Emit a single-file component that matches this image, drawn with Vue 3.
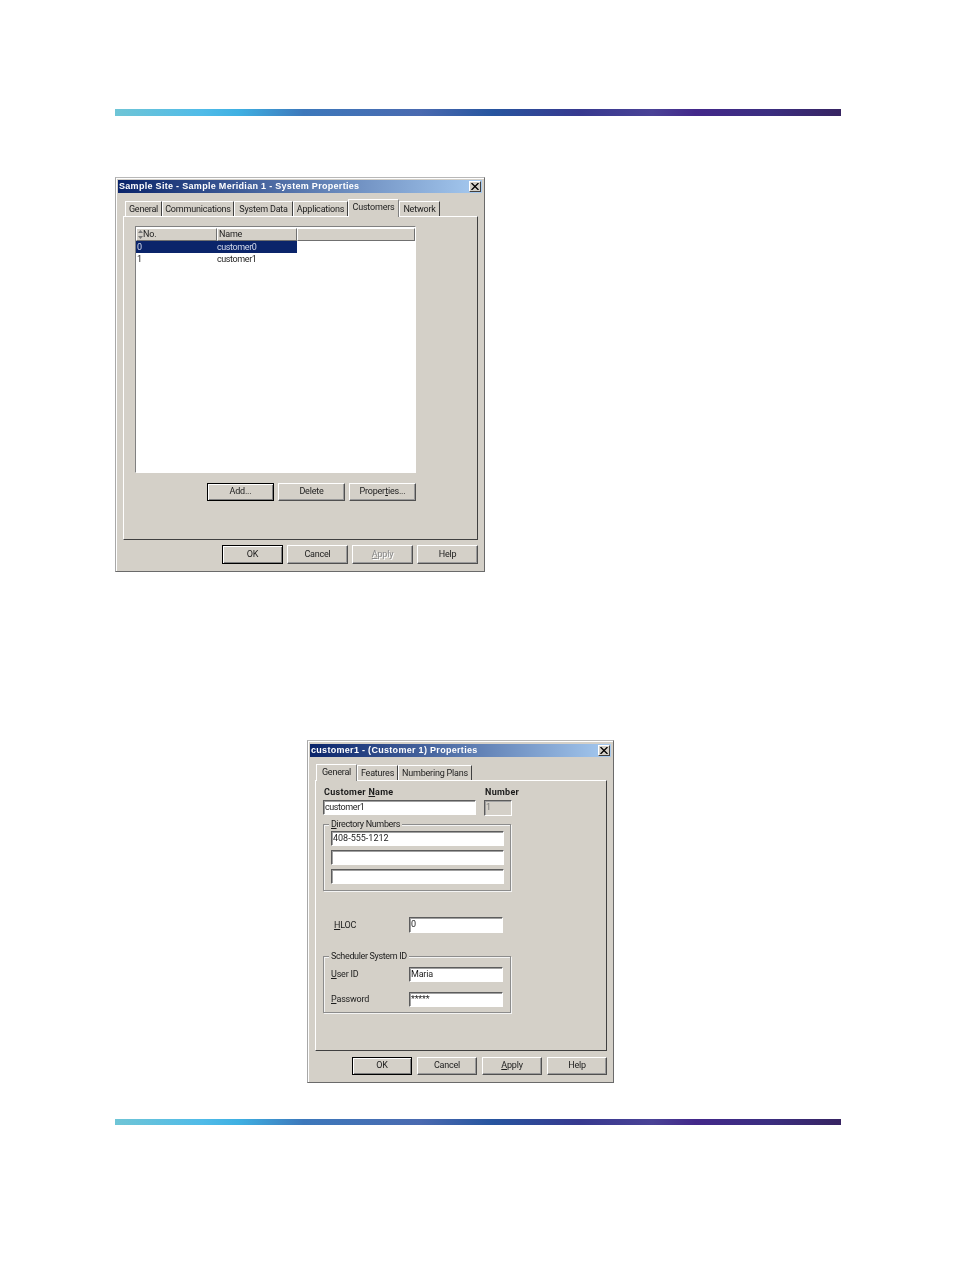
<script setup>
const tabs1 = [
  { label: 'General', w: 37 },
  { label: 'Communications', w: 72 },
  { label: 'System Data', w: 59 },
  { label: 'Applications', w: 55 },
  { label: 'Customers', w: 51, active: true },
  { label: 'Network', w: 41 },
]
const tabs2 = [
  { label: 'General', w: 41, active: true },
  { label: 'Features', w: 41 },
  { label: 'Numbering Plans', w: 74 },
]
const rows = [
  { no: '0', name: 'customer0', selected: true },
  { no: '1', name: 'customer1' },
]
</script>

<template>
  <div class="page">
    <div class="bar bar-top"></div>

    <section class="dialog dialog-one">
      <header class="title">
        <span class="title-text">Sample Site - Sample Meridian 1 - System Properties</span>
        <span class="close"><svg width="8" height="7" viewBox="0 0 8 7"><path d="M0.5 0 L7.5 7 M7.5 0 L0.5 7" stroke="#000" stroke-width="1.3" fill="none"/></svg></span>
      </header>
      <div class="tabs tabs-one">
        <div v-for="t in tabs1" :key="t.label" class="tab" :class="{ active: t.active }" :style="{ width: t.w + 'px' }">{{ t.label }}</div>
      </div>
      <div class="panel panel-one">
        <div class="list">
          <div class="list-head">
            <div class="col col-no">
              <svg class="sort" width="5" height="10" viewBox="0 0 5 10"><path d="M2.5 0 L5 3 H0 Z M0 6 H5 L2.5 9 Z" fill="#777"/></svg>
              No.
            </div>
            <div class="col col-name">Name</div>
            <div class="col col-rest"></div>
          </div>
          <div v-for="r in rows" :key="r.no" class="row" :class="{ selected: r.selected }">
            <span class="cell-no">{{ r.no }}</span>
            <span class="cell-name">{{ r.name }}</span>
          </div>
        </div>
        <div class="list-actions">
          <button class="btn btn-small default">Add...</button>
          <button class="btn btn-small">Delete</button>
          <button class="btn btn-small">Proper<u>t</u>ies...</button>
        </div>
      </div>
      <footer class="footer footer-one">
        <button class="btn btn-one default">OK</button>
        <button class="btn btn-one">Cancel</button>
        <button class="btn btn-one disabled"><u>A</u>pply</button>
        <button class="btn btn-one">Help</button>
      </footer>
    </section>

    <section class="dialog dialog-two">
      <header class="title">
        <span class="title-text">customer1 - (Customer 1) Properties</span>
        <span class="close"><svg width="8" height="7" viewBox="0 0 8 7"><path d="M0.5 0 L7.5 7 M7.5 0 L0.5 7" stroke="#000" stroke-width="1.3" fill="none"/></svg></span>
      </header>
      <div class="tabs tabs-two">
        <div v-for="t in tabs2" :key="t.label" class="tab" :class="{ active: t.active }" :style="{ width: t.w + 'px' }">{{ t.label }}</div>
      </div>
      <div class="panel panel-two">
        <div class="name-row">
          <div class="name-col">
            <div class="bold-label">Customer <u>N</u>ame</div>
            <div class="field field-name">customer1</div>
          </div>
          <div class="number-col">
            <div class="bold-label">Number</div>
            <div class="field field-number">1</div>
          </div>
        </div>

        <div class="group group-dn">
          <span class="legend"><u>D</u>irectory Numbers</span>
          <div class="field field-dn">408-555-1212</div>
          <div class="field field-dn"></div>
          <div class="field field-dn"></div>
        </div>

        <div class="form-row hloc-row">
          <label class="hloc-label"><u>H</u>LOC</label>
          <div class="field field-short">0</div>
        </div>

        <div class="group group-sched">
          <span class="legend">Scheduler System ID</span>
          <div class="form-row">
            <label class="sched-label"><u>U</u>ser ID</label>
            <div class="field field-user">Maria</div>
          </div>
          <div class="form-row pass-row">
            <label class="sched-label"><u>P</u>assword</label>
            <div class="field field-user">*****</div>
          </div>
        </div>
      </div>
      <footer class="footer footer-two">
        <button class="btn btn-two default">OK</button>
        <button class="btn btn-two">Cancel</button>
        <button class="btn btn-two"><u>A</u>pply</button>
        <button class="btn btn-two">Help</button>
      </footer>
    </section>

    <div class="bar bar-bottom"></div>
  </div>
</template>

<style scoped>
.page {
  width: 954px;
  height: 1272px;
  box-sizing: border-box;
  padding: 109px 0 0 115px;
  background: #fff;
  font-family: Roboto, "Liberation Sans", Arial, sans-serif;
  font-size: 9px;
  letter-spacing: -0.2px;
  color: #1c1c1c;
  overflow: hidden;
}
.bar {
  width: 726px;
  background: linear-gradient(90deg, #6fc5d6 0%, #50bbe8 12%, #3fb0e2 17%, #3d78bb 26%, #4a6ab0 42%, #27559f 52%, #37398f 64%, #4a4296 74%, #43288a 80%, #3b2e80 90%, #372462 100%);
}
.bar-top { height: 7px; }
.bar-bottom { height: 6px; margin-top: 36px; }

.dialog {
  box-sizing: border-box;
  background: #d4d0c8;
  border: 1px solid #6a6a6a;
  border-top-color: #b8b8b8;
  border-left-color: #a8a8a8;
  box-shadow: inset 1px 1px 0 #fff;
  padding: 2px;
  display: flex;
  flex-direction: column;
  filter: blur(0.25px);
}
.dialog-one { width: 370px; height: 395px; margin-top: 61px; }
.dialog-two { width: 307px; height: 343px; margin-top: 168px; margin-left: 192px; padding-top: 3px; }

.title {
  height: 13px;
  flex: none;
  display: flex;
  align-items: center;
  justify-content: space-between;
  padding-left: 1px;
  background: linear-gradient(90deg, #0a246a 0%, #a6caf0 100%);
  color: #fff;
  white-space: nowrap;
}
.title-text {
  font-family: "Liberation Sans", Arial, sans-serif;
  font-weight: bold;
  font-size: 9px;
  letter-spacing: 0.3px;
  line-height: 11px;
  margin-top: -1px;
}
.close {
  width: 12px;
  height: 11px;
  box-sizing: border-box;
  background: #d4d0c8;
  border: 1px solid;
  border-color: #fff #404040 #404040 #fff;
  display: flex;
  align-items: center;
  justify-content: center;
  margin-right: 1px;
}

.tabs {
  display: flex;
  align-items: flex-end;
  position: relative;
  z-index: 1;
  margin-left: 5px;
  flex: none;
}
.tabs-one { height: 18px; margin-top: 6px; padding-left: 2px; }
.tabs-two { height: 17px; margin-top: 7px; padding-left: 1px; }
.tab {
  box-sizing: border-box;
  height: 15px;
  border: 1px solid;
  border-color: #fff #404040 transparent #fff;
  border-bottom: 0;
  text-align: center;
  line-height: 15px;
  white-space: nowrap;
  background: #d4d0c8;
  margin-bottom: 1px;
}
.tab.active {
  height: 100%;
  margin-bottom: 0;
  line-height: 14px;
  border-right-color: #808080;
}

.panel {
  box-sizing: border-box;
  flex: none;
  margin-top: -1px;
  margin-left: 5px;
  border: 1px solid;
  border-color: #fff #404040 #404040 #fff;
}
.panel-one { width: 355px; height: 324px; padding: 9px 0 0 11px; }
.panel-two { width: 292px; height: 271px; padding: 6px 0 0 7px; }

.list {
  box-sizing: border-box;
  width: 281px;
  height: 247px;
  background: #fff;
  border: 1px solid;
  border-color: #808080 #fff #fff #808080;
}
.list-head {
  display: flex;
  height: 13px;
  margin-top: 1px;
  background: #d4d0c8;
}
.col {
  box-sizing: border-box;
  height: 13px;
  line-height: 11px;
  border: 1px solid;
  border-color: #fff #707070 #707070 #fff;
  padding-left: 1px;
  white-space: nowrap;
  display: flex;
  align-items: center;
}
.col-no { width: 81px; }
.col-name { width: 80px; }
.col-rest { flex: 1; }
.sort { flex: none; }
.row {
  display: flex;
  width: 161px;
  height: 12px;
  line-height: 12px;
  white-space: nowrap;
}
.row.selected { background: #0a246a; color: #d6dcec; }
.cell-no { width: 81px; padding-left: 1px; box-sizing: border-box; }
.cell-name { flex: 1; letter-spacing: -0.4px; }

.list-actions {
  display: flex;
  justify-content: flex-end;
  gap: 4px;
  width: 281px;
  margin-top: 10px;
}

.btn {
  box-sizing: border-box;
  flex: none;
  margin: 0;
  padding: 0 0 2px;
  background: #d4d0c8;
  border: 1px solid;
  border-color: #fff #505050 #505050 #fff;
  font: inherit;
  letter-spacing: inherit;
  color: inherit;
  text-align: center;
  box-shadow: inset -1px -1px 0 #9a9a9a;
}
.btn.default {
  border: 1px solid #000;
  box-shadow: inset 1px 1px 0 #fff, inset -1px -1px 0 #808080;
}
.btn.disabled { color: #8a8a8a; text-shadow: 1px 1px 0 #fff; }
.btn-small { width: 67px; height: 18px; }
.btn-one { width: 61px; height: 19px; }
.btn-two { width: 60px; height: 18px; }

.footer {
  display: flex;
  justify-content: flex-end;
  flex: none;
}
.footer-one { gap: 4px; margin-top: 5px; padding-right: 4px; }
.footer-two { gap: 5px; margin-top: 6px; padding-right: 4px; }

.name-row { display: flex; gap: 8px; height: 28px; }
.name-col { width: 153px; }
.number-col { width: 28px; }
.bold-label {
  height: 12px;
  line-height: 10px;
  margin-bottom: 1px;
  padding-left: 1px;
  font-weight: bold;
  letter-spacing: 0.3px;
  white-space: nowrap;
}
.field {
  box-sizing: border-box;
  background: #fff;
  border: 1px solid;
  border-color: #5c5c5c #fff #fff #5c5c5c;
  box-shadow: inset 1px 1px 0 #a0a0a0;
  padding-left: 1px;
  white-space: nowrap;
  line-height: 12px;
}
.field-name { width: 153px; height: 15px; letter-spacing: -0.4px; }
.field-number { width: 28px; height: 16px; background: #d4d0c8; color: #777; }

.group {
  position: relative;
  box-sizing: border-box;
  width: 188px;
  border: 1px solid #8c8c8c;
  box-shadow: 1px 1px 0 #f4f4f4, inset 1px 1px 0 #f4f4f4;
}
.legend {
  position: absolute;
  left: 5px;
  top: -7px;
  height: 12px;
  line-height: 12px;
  padding: 0 2px;
  background: #d4d0c8;
  letter-spacing: -0.35px;
  white-space: nowrap;
}
.group-dn {
  height: 67px;
  margin-top: 9px;
  padding: 6px 0 0 7px;
  display: flex;
  flex-direction: column;
  gap: 4px;
}
.field-dn { width: 173px; height: 15px; letter-spacing: 0; }

.form-row { display: flex; align-items: center; }
.hloc-row { margin-top: 26px; }
.hloc-label { box-sizing: border-box; width: 86px; padding-left: 11px; flex: none; }
.field-short { width: 94px; height: 16px; }

.group-sched {
  height: 57px;
  margin-top: 23px;
  padding: 10px 0 0 7px;
}
.sched-label { width: 78px; flex: none; padding-bottom: 2px; }
.field-user { width: 94px; height: 15px; }
.pass-row { margin-top: 10px; }
</style>

<style>
html, body { margin: 0; background: #fff; }
</style>
